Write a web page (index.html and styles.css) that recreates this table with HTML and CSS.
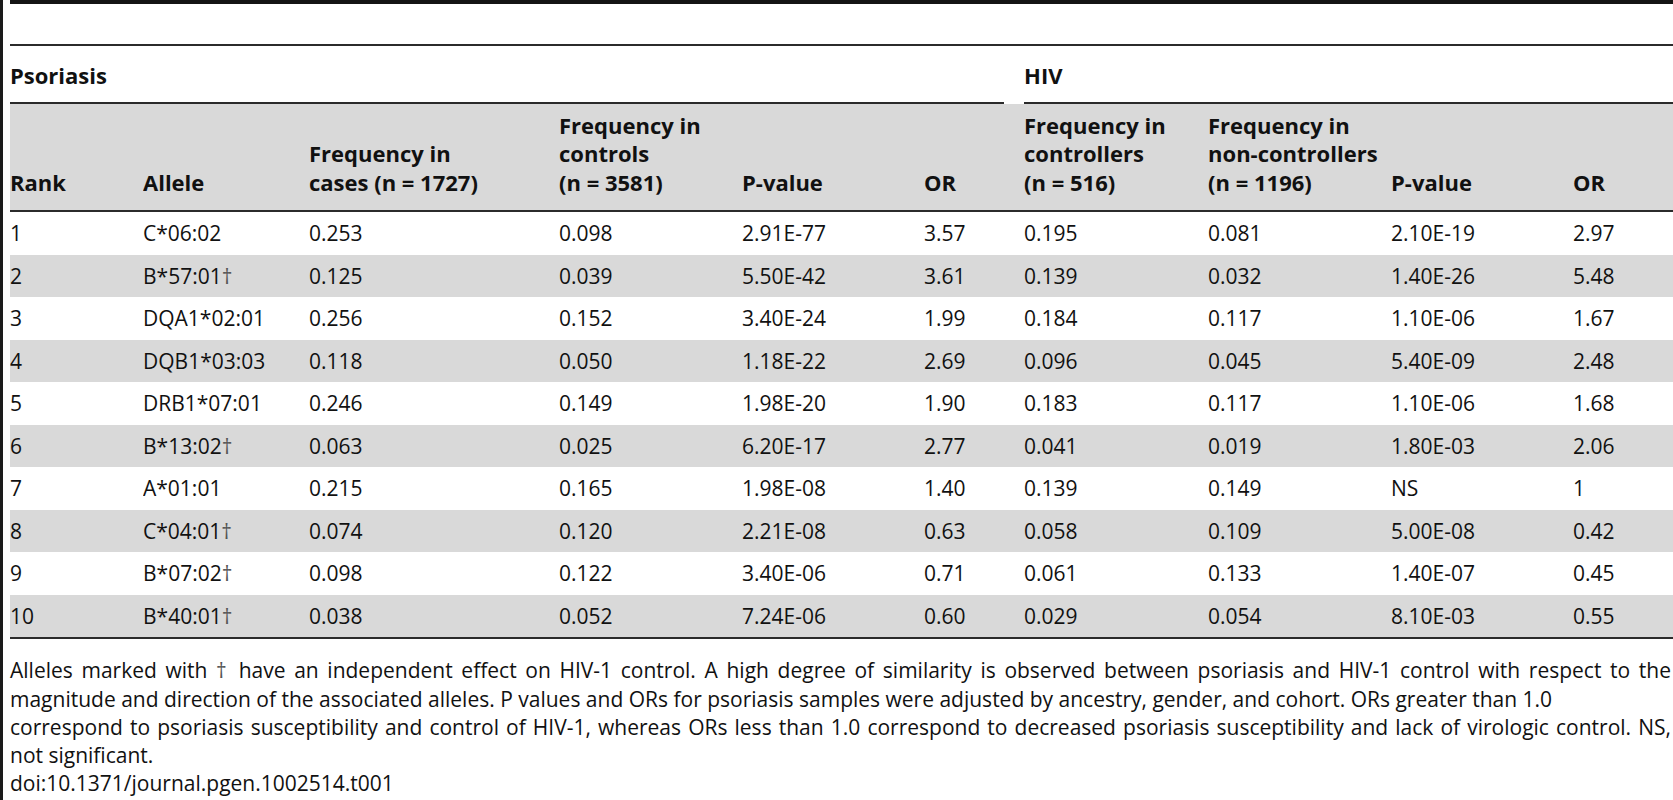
FILE: index.html
```html
<!DOCTYPE html>
<html lang="en">
<head>
  <meta charset="UTF-8" />
  <meta name="viewport" content="width=device-width, initial-scale=1" />
  <title>Table 1. Top ten HLA alleles associated with psoriasis and HIV-1 control</title>
  <link rel="stylesheet" href="styles.css">
</head>
<body>

  <div class="frame">
    <div class="table-box">
      <table class="alleles">
        <colgroup>
          <col class="c-rank">
          <col class="c-allele">
          <col class="c-cases">
          <col class="c-controls">
          <col class="c-p">
          <col class="c-or">
          <col class="c-hiv-ctrl">
          <col class="c-hiv-non">
          <col class="c-p">
          <col class="c-or-last">
        </colgroup>
        <thead>
          <tr class="groups">
            <th colspan="6" class="group group-first"><div class="group-label">Psoriasis</div></th>
            <th colspan="4" class="group"><div class="group-label">HIV</div></th>
          </tr>
          <tr class="heads">
            <th>Rank</th>
            <th>Allele</th>
            <th>Frequency in<br>cases (n = 1727)</th>
            <th>Frequency in<br>controls<br>(n = 3581)</th>
            <th>P-value</th>
            <th>OR</th>
            <th>Frequency in<br>controllers<br>(n = 516)</th>
            <th>Frequency in<br>non-controllers<br>(n = 1196)</th>
            <th>P-value</th>
            <th>OR</th>
          </tr>
        </thead>
        <tbody>
          <tr><td>1</td><td>C*06:02</td><td>0.253</td><td>0.098</td><td>2.91E-77</td><td>3.57</td><td>0.195</td><td>0.081</td><td>2.10E-19</td><td>2.97</td></tr>
          <tr><td>2</td><td>B*57:01<span class="dag">†</span></td><td>0.125</td><td>0.039</td><td>5.50E-42</td><td>3.61</td><td>0.139</td><td>0.032</td><td>1.40E-26</td><td>5.48</td></tr>
          <tr><td>3</td><td>DQA1*02:01</td><td>0.256</td><td>0.152</td><td>3.40E-24</td><td>1.99</td><td>0.184</td><td>0.117</td><td>1.10E-06</td><td>1.67</td></tr>
          <tr><td>4</td><td>DQB1*03:03</td><td>0.118</td><td>0.050</td><td>1.18E-22</td><td>2.69</td><td>0.096</td><td>0.045</td><td>5.40E-09</td><td>2.48</td></tr>
          <tr><td>5</td><td>DRB1*07:01</td><td>0.246</td><td>0.149</td><td>1.98E-20</td><td>1.90</td><td>0.183</td><td>0.117</td><td>1.10E-06</td><td>1.68</td></tr>
          <tr><td>6</td><td>B*13:02<span class="dag">†</span></td><td>0.063</td><td>0.025</td><td>6.20E-17</td><td>2.77</td><td>0.041</td><td>0.019</td><td>1.80E-03</td><td>2.06</td></tr>
          <tr><td>7</td><td>A*01:01</td><td>0.215</td><td>0.165</td><td>1.98E-08</td><td>1.40</td><td>0.139</td><td>0.149</td><td>NS</td><td>1</td></tr>
          <tr><td>8</td><td>C*04:01<span class="dag">†</span></td><td>0.074</td><td>0.120</td><td>2.21E-08</td><td>0.63</td><td>0.058</td><td>0.109</td><td>5.00E-08</td><td>0.42</td></tr>
          <tr><td>9</td><td>B*07:02<span class="dag">†</span></td><td>0.098</td><td>0.122</td><td>3.40E-06</td><td>0.71</td><td>0.061</td><td>0.133</td><td>1.40E-07</td><td>0.45</td></tr>
          <tr><td>10</td><td>B*40:01<span class="dag">†</span></td><td>0.038</td><td>0.052</td><td>7.24E-06</td><td>0.60</td><td>0.029</td><td>0.054</td><td>8.10E-03</td><td>0.55</td></tr>
        </tbody>
      </table>
    </div>

    <div class="notes">
      <p class="caption">
        <span class="line full">Alleles marked with <span class="dag">†</span> have an independent effect on HIV-1 control. A high degree of similarity is observed between psoriasis and HIV-1 control with respect to the</span>
        <span class="line">magnitude and direction of the associated alleles. P values and ORs for psoriasis samples were adjusted by ancestry, gender, and cohort. ORs greater than 1.0</span>
        <span class="line full">correspond to psoriasis susceptibility and control of HIV-1, whereas ORs less than 1.0 correspond to decreased psoriasis susceptibility and lack of virologic control. NS,</span>
        <span class="line">not significant.</span>
      </p>
      <p class="doi">doi:10.1371/journal.pgen.1002514.t001</p>
    </div>
  </div>

</body>
</html>
```

FILE: styles.css
```css
html, body {
  margin: 0;
  background: white;
  overflow: hidden;
}

body {
  font-family: "Open Sans", Lato, sans-serif;
  color: #111;
}

.frame {
  border-left: 3px solid #1a1a1a;
  padding-left: 7px;
  min-height: 800px;
  box-sizing: border-box;
}

.table-box {
  border-top: 4px solid #141414;
  padding-top: 40px;
  width: 1663px;
}

.alleles {
  width: 1663px;
  table-layout: fixed;
  border-collapse: separate;
  border-spacing: 0;
  border-top: 2px solid #2b2b2b;
  font-size: 21px;
}

.c-rank { width: 133px; }
.c-allele { width: 166px; }
.c-cases { width: 250px; }
.c-controls { width: 183px; }
.c-p { width: 182px; }
.c-or { width: 100px; }
.c-hiv-ctrl { width: 184px; }
.c-hiv-non { width: 183px; }
.c-or-last { width: 100px; }

th, td {
  text-align: left;
  padding: 0 8px 0 0;
  white-space: nowrap;
  overflow: hidden;
}

th {
  font-weight: 700;
  font-size: 22px;
}

.group {
  padding: 0;
}

.group-first {
  padding-right: 20px;
}

.group-label {
  height: 58px;
  box-sizing: border-box;
  display: flex;
  align-items: center;
  padding-top: 1px;
  border-bottom: 2px solid #2b2b2b;
}

.heads th {
  background: #d9d9d9;
  vertical-align: bottom;
  line-height: 28.4px;
  padding-top: 7px;
  padding-bottom: 14px;
  border-bottom: 2px solid #2b2b2b;
}

tbody td {
  line-height: 24.5px;
  padding-top: 9px;
  padding-bottom: 9px;
  vertical-align: middle;
}

tbody tr:nth-child(even) td {
  background: #d9d9d9;
}

tbody tr:last-child td {
  border-bottom: 2px solid #2b2b2b;
}

.dag {
  color: #555;
}

/* caption under the table, broken as in the printed figure */
.notes {
  width: 1661px;
  margin-top: 17px;
  font-size: 21px;
  line-height: 28.3px;
}

.notes p {
  margin: 0;
}

.caption .line {
  display: block;
  white-space: nowrap;
}

.caption .full {
  white-space: normal;
  text-align: justify;
  text-align-last: justify;
}
```
